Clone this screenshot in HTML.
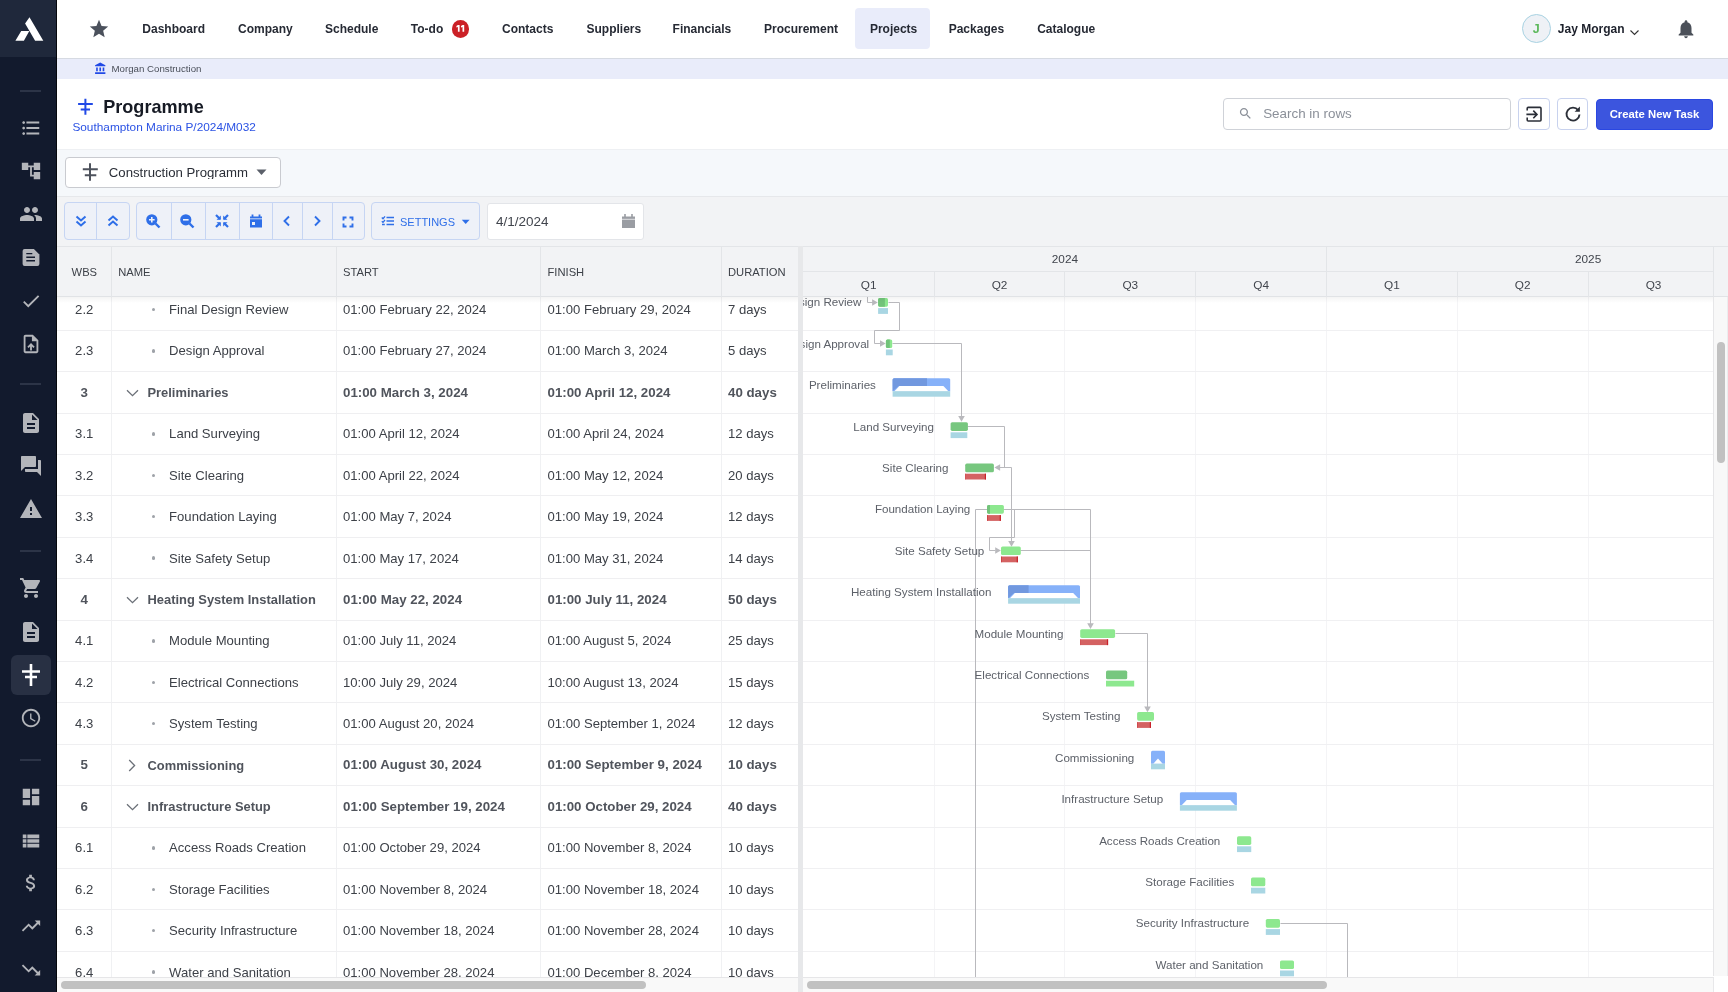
<!DOCTYPE html><html><head><meta charset="utf-8"><style>
html,body{margin:0;padding:0;width:1728px;height:992px;overflow:hidden;background:#fff;font-family:"Liberation Sans", sans-serif;}
div,svg{box-sizing:border-box;}
</style></head><body><div style="position:absolute;left:0;top:0;width:1728px;height:992px;overflow:hidden;will-change:transform;background:#fff">
<div style="position:absolute;left:0px;top:0px;width:56px;height:992px;background:#121a2d;"></div>
<div style="position:absolute;left:0px;top:0px;width:56px;height:57px;background:#1f283b;"></div>
<div style="position:absolute;left:56px;top:0px;width:1px;height:992px;background:#05070c;"></div>
<svg style="position:absolute;left:0px;top:0px;" width="56" height="57" viewBox="0 0 56 57"><path fill="#fff" d="M29.5 17.2L43.3 40.8H35.1L25.1 23.6Z M21.2 30.9H29.3L23.9 40.8H15.4Z"/></svg>
<div style="position:absolute;left:20px;top:90px;width:21px;height:2px;background:#2c3447;"></div>
<div style="position:absolute;left:20px;top:382.5px;width:21px;height:2px;background:#2c3447;"></div>
<div style="position:absolute;left:20px;top:549.5px;width:21px;height:2px;background:#2c3447;"></div>
<div style="position:absolute;left:20px;top:759px;width:21px;height:2px;background:#2c3447;"></div>
<svg style="position:absolute;left:19.50px;top:116.70px" width="22" height="22" viewBox="0 0 24 24"><path fill="#b3b5ba" d="M4 10.5c-.83 0-1.5.67-1.5 1.5s.67 1.5 1.5 1.5 1.5-.67 1.5-1.5-.67-1.5-1.5-1.5zm0-6c-.83 0-1.5.67-1.5 1.5S3.17 7.5 4 7.5 5.5 6.830 5.5 6 4.83 4.5 4 4.5zm0 12c-.83 0-1.5.68-1.5 1.5s.68 1.5 1.5 1.5 1.5-.68 1.5-1.5-.67-1.5-1.5-1.5zM7 19h14v-2H7v2zm0-6h14v-2H7v2zm0-8v2h14V5H7z"/></svg>
<svg style="position:absolute;left:19.50px;top:159.50px" width="22" height="22" viewBox="0 0 24 24"><path fill="#b3b5ba" d="M22 11V3h-7v3H9V3H2v8h7V8h2v10h4v3h7v-8h-7v3h-2V8h2v3z"/></svg>
<svg style="position:absolute;left:18.50px;top:202.40px" width="24" height="24" viewBox="0 0 24 24"><path fill="#b3b5ba" d="M16 11c1.66 0 2.99-1.34 2.99-3S17.66 5 16 5c-1.66 0-3 1.34-3 3s1.34 3 3 3zm-8 0c1.66 0 2.99-1.34 2.99-3S9.66 5 8 5C6.34 5 5 6.34 5 8s1.34 3 3 3zm0 2c-2.33 0-7 1.170-7 3.5V19h14v-2.5c0-2.33-4.67-3.5-7-3.5zm8 0c-.29 0-.62.02-.97.05 1.16.84 1.97 1.97 1.97 3.45V19h6v-2.5c0-2.33-4.67-3.5-7-3.5z"/></svg>
<svg style="position:absolute;left:19.50px;top:290.00px" width="22" height="22" viewBox="0 0 24 24"><path fill="#b3b5ba" d="M9 16.2L4.8 12l-1.4 1.4L9 19 21 7l-1.4-1.4L9 16.2z"/></svg>
<svg style="position:absolute;left:19.50px;top:332.70px" width="22" height="22" viewBox="0 0 24 24"><path fill="#b3b5ba" d="M14 2H6c-1.1 0-1.99.9-1.99 2L4 20c0 1.1.89 2 1.99 2H18c1.1 0 2-.9 2-2V8l-6-6zm4 18H6V4h7v5h5v11zM8 15.01l1.41 1.41L11 14.84V19h2v-4.16l1.59 1.59L16 15.01 12.01 11z"/></svg>
<svg style="position:absolute;left:18.50px;top:410.50px" width="24" height="24" viewBox="0 0 24 24"><path fill="#b3b5ba" d="M14 2H6c-1.1 0-1.99.9-1.99 2L4 20c0 1.1.89 2 1.99 2H18c1.1 0 2-.9 2-2V8l-6-6zm2 16H8v-2h8v2zm0-4H8v-2h8v2zm-3-5V3.5L18.5 9H13z"/></svg>
<svg style="position:absolute;left:18.50px;top:454.00px" width="24" height="24" viewBox="0 0 24 24"><path fill="#b3b5ba" d="M21 6h-2v9H6v2c0 .55.45 1 1 1h11l4 4V7c0-.55-.45-1-1-1zm-4 6V3c0-.55-.45-1-1-1H3c-.55 0-1 .45-1 1v14l4-4h10c.55 0 1-.45 1-1z"/></svg>
<svg style="position:absolute;left:18.50px;top:497.00px" width="24" height="24" viewBox="0 0 24 24"><path fill="#b3b5ba" d="M1 21h22L12 2 1 21zm12-3h-2v-2h2v2zm0-4h-2v-4h2v4z"/></svg>
<svg style="position:absolute;left:18.50px;top:576.40px" width="24" height="24" viewBox="0 0 24 24"><path fill="#b3b5ba" d="M7 18c-1.1 0-1.99.9-1.99 2S5.9 22 7 22s2-.9 2-2-.9-2-2-2zM1 2v2h2l3.6 7.59-1.35 2.45c-.16.28-.25.61-.25.96 0 1.1.9 2 2 2h12v-2H7.42c-.14 0-.25-.11-.25-.25l.03-.12.9-1.63h7.45c.75 0 1.41-.41 1.75-1.03l3.58-6.49c.08-.14.12-.31.12-.48 0-.55-.45-1-1-1H5.21l-.94-2H1zm16 16c-1.1 0-1.99.9-1.99 2s.89 2 1.99 2 2-.9 2-2-.9-2-2-2z"/></svg>
<svg style="position:absolute;left:18.50px;top:619.70px" width="24" height="24" viewBox="0 0 24 24"><path fill="#b3b5ba" d="M14 2H6c-1.1 0-1.99.9-1.99 2L4 20c0 1.1.89 2 1.99 2H18c1.1 0 2-.9 2-2V8l-6-6zm2 16H8v-2h8v2zm0-4H8v-2h8v2zm-3-5V3.5L18.5 9H13z"/></svg>
<svg style="position:absolute;left:19.50px;top:707.00px" width="22" height="22" viewBox="0 0 24 24"><path fill="#b3b5ba" d="M11.99 2C6.47 2 2 6.48 2 12s4.47 10 9.99 10C17.52 22 22 17.52 22 12S17.52 2 11.99 2zM12 20c-4.42 0-8-3.58-8-8s3.58-8 8-8 8 3.58 8 8-3.58 8-8 8zm.5-13H11v6l5.25 3.15.75-1.23-4.5-2.67z"/></svg>
<svg style="position:absolute;left:19.50px;top:786.00px" width="22" height="22" viewBox="0 0 24 24"><path fill="#b3b5ba" d="M3 13h8V3H3v10zm0 8h8v-6H3v6zm10 0h8V11h-8v10zm0-18v6h8V3h-8z"/></svg>
<svg style="position:absolute;left:19.50px;top:829.50px" width="22" height="22" viewBox="0 0 24 24"><path fill="#b3b5ba" d="M3 14h4v-4H3v4zm0 5h4v-4H3v4zM3 9h4V5H3v4zm5 5h13v-4H8v4zm0 5h13v-4H8v4zM8 5v4h13V5H8z"/></svg>
<svg style="position:absolute;left:19.50px;top:872.00px" width="22" height="22" viewBox="0 0 24 24"><path fill="#b3b5ba" d="M11.8 10.9c-2.27-.59-3-1.2-3-2.15 0-1.09 1.01-1.85 2.7-1.85 1.78 0 2.44.85 2.5 2.1h2.21c-.07-1.72-1.12-3.3-3.21-3.81V3h-3v2.16c-1.94.42-3.5 1.68-3.5 3.61 0 2.31 1.91 3.46 4.7 4.13 2.5.6 3 1.48 3 2.41 0 .69-.49 1.79-2.7 1.790-2.06 0-2.87-.92-2.98-2.1h-2.2c.12 2.19 1.76 3.42 3.68 3.83V21h3v-2.15c1.95-.37 3.5-1.5 3.5-3.55 0-2.84-2.43-3.81-4.7-4.4z"/></svg>
<svg style="position:absolute;left:19.50px;top:915.00px" width="22" height="22" viewBox="0 0 24 24"><path fill="#b3b5ba" d="M16 6l2.29 2.29-4.88 4.88-4-4L2 16.59 3.410 18l6-6 4 4 6.3-6.29L22 12V6z"/></svg>
<svg style="position:absolute;left:19.50px;top:958.80px" width="22" height="22" viewBox="0 0 24 24"><path fill="#b3b5ba" d="M16 18l2.29-2.29-4.88-4.88-4 4L2 7.41 3.41 6l6 6 4-4 6.3 6.29L22 12v6z"/></svg>
<div style="position:absolute;left:11px;top:655px;width:40px;height:40px;background:#283043;border-radius:6px;"></div>
<svg style="position:absolute;left:0px;top:240px;" width="56" height="30" viewBox="0 0 56 30"><path d="M24.6 9H33.9L39.4 14.5V24Q39.4 26 37.4 26H24.6Q22.6 26 22.6 24V11Q22.6 9 24.6 9Z" fill="#b3b5ba"/><path d="M26.3 13.6H32.3 M26.3 17.3H35 M26.3 20.8H35" stroke="#121a2d" stroke-width="1.4"/></svg>
<svg style="position:absolute;left:20px;top:663px;" width="22" height="24" viewBox="0 0 22 24"><path d="M11 1V23 M2 8.5H20 M5 14H17" stroke="#fff" stroke-width="2.6" fill="none"/></svg>
<div style="position:absolute;left:57px;top:58px;width:1671px;height:1px;background:#d6dae2;"></div>
<svg style="position:absolute;left:88.30px;top:17.60px" width="22" height="22" viewBox="0 0 24 24"><path fill="#4b515c" d="M12 17.27L18.18 21l-1.64-7.03L22 9.24l-7.19-.61L12 2 9.19 8.63 2 9.24l5.46 4.73L5.82 21z"/></svg>
<div style="position:absolute;left:855px;top:7.6px;width:75px;height:41.7px;background:#e9ecfa;border-radius:4px;"></div>
<div style="position:absolute;left:142.30px;top:23.00px;font-size:12px;line-height:12px;color:#262a34;font-weight:bold;white-space:nowrap;">Dashboard</div>
<div style="position:absolute;left:238.00px;top:23.00px;font-size:12px;line-height:12px;color:#262a34;font-weight:bold;white-space:nowrap;">Company</div>
<div style="position:absolute;left:325.00px;top:23.00px;font-size:12px;line-height:12px;color:#262a34;font-weight:bold;white-space:nowrap;">Schedule</div>
<div style="position:absolute;left:410.80px;top:23.00px;font-size:12px;line-height:12px;color:#262a34;font-weight:bold;white-space:nowrap;">To-do</div>
<div style="position:absolute;left:502.00px;top:23.00px;font-size:12px;line-height:12px;color:#262a34;font-weight:bold;white-space:nowrap;">Contacts</div>
<div style="position:absolute;left:586.50px;top:23.00px;font-size:12px;line-height:12px;color:#262a34;font-weight:bold;white-space:nowrap;">Suppliers</div>
<div style="position:absolute;left:672.60px;top:23.00px;font-size:12px;line-height:12px;color:#262a34;font-weight:bold;white-space:nowrap;">Financials</div>
<div style="position:absolute;left:764.00px;top:23.00px;font-size:12px;line-height:12px;color:#262a34;font-weight:bold;white-space:nowrap;">Procurement</div>
<div style="position:absolute;left:869.90px;top:23.00px;font-size:12px;line-height:12px;color:#262a34;font-weight:bold;white-space:nowrap;">Projects</div>
<div style="position:absolute;left:948.70px;top:23.00px;font-size:12px;line-height:12px;color:#262a34;font-weight:bold;white-space:nowrap;">Packages</div>
<div style="position:absolute;left:1037.20px;top:23.00px;font-size:12px;line-height:12px;color:#262a34;font-weight:bold;white-space:nowrap;">Catalogue</div>
<div style="position:absolute;left:451.7px;top:20.2px;width:17.5px;height:17.5px;background:#cb2127;border-radius:50%;"></div>
<svg style="position:absolute;left:451px;top:19px;" width="20" height="20" viewBox="0 0 20 20"><path d="M6.9 6H8.6V12.8H6.9V7.9L5.4 8.6V7.1Z M11.5 6H13.2V12.8H11.5V7.9L10 8.6V7.1Z" fill="#fff"/></svg>
<div style="position:absolute;left:1521.8px;top:14.3px;width:29px;height:29px;background:#eef1f6;border:1px solid #a8d2e2;border-radius:50%;"></div>
<div style="position:absolute;left:1236.30px;width:600px;text-align:center;top:23.00px;font-size:12.5px;line-height:12.5px;color:#5cb85c;font-weight:bold;white-space:nowrap;">J</div>
<div style="position:absolute;left:1557.80px;top:23.00px;font-size:12px;line-height:12px;color:#1c202b;font-weight:bold;white-space:nowrap;">Jay Morgan</div>
<svg style="position:absolute;left:1629px;top:28.5px;" width="11" height="8" viewBox="0 0 11 8"><path d="M1.5 1.5L5.5 5.5L9.5 1.5" stroke="#333" stroke-width="1.1" fill="none"/></svg>
<svg style="position:absolute;left:1674.60px;top:18.00px" width="22" height="22" viewBox="0 0 24 24"><path fill="#4b5059" d="M12 22c1.1 0 2-.9 2-2h-4c0 1.1.89 2 2 2zm6-6v-5c0-3.07-1.64-5.64-4.5-6.32V4c0-.83-.67-1.5-1.5-1.5s-1.5.67-1.5 1.5v.68C7.63 5.36 6 7.920 6 11v5l-2 2v1h16v-1l-2-2z"/></svg>
<div style="position:absolute;left:57px;top:59px;width:1671px;height:20px;background:#e9ecfa;"></div>
<svg style="position:absolute;left:94.30px;top:62.00px" width="13" height="13" viewBox="0 0 24 24"><path fill="#2149e6" d="M4 10v7h3v-7H4zm6 0v7h3v-7h-3zM2 22h19v-3H2v3zm14-12v7h3v-7h-3zm-4.5-9L2 6v2h19V6l-9.5-5z"/></svg>
<div style="position:absolute;left:111.50px;top:64.00px;font-size:9.7px;line-height:9.7px;color:#4a4f5a;font-weight:normal;white-space:nowrap;">Morgan Construction</div>
<svg style="position:absolute;left:76px;top:97px;" width="20" height="20" viewBox="0 0 20 20"><path d="M9.4 1.8V17.8 M2.1 7.1H16.8 M4.7 12.6H14" stroke="#2149e6" stroke-width="2" fill="none"/></svg>
<div style="position:absolute;left:103.20px;top:98.00px;font-size:18.1px;line-height:18.1px;color:#161a24;font-weight:bold;white-space:nowrap;">Programme</div>
<div style="position:absolute;left:72.40px;top:122.00px;font-size:11.84px;line-height:11.84px;color:#2b52e4;font-weight:normal;white-space:nowrap;">Southampton Marina P/2024/M032</div>
<div style="position:absolute;left:1223px;top:98.3px;width:288px;height:31.7px;border:1px solid #cfd2d8;border-radius:4px;background:#fff;"></div>
<svg style="position:absolute;left:1237.50px;top:106.10px" width="15" height="15" viewBox="0 0 24 24"><path fill="#8b9099" d="M15.5 14h-.79l-.28-.27C15.41 12.59 16 11.11 16 9.5 16 5.91 13.09 3 9.5 3S3 5.91 3 9.5 5.91 16 9.5 16c1.61 0 3.09-.59 4.23-1.57l.27.28v.79l5 4.99L20.49 19l-4.99-5zm-6 0C7.01 14 5 11.99 5 9.5S7.01 5 9.5 5 14 7.01 14 9.5 11.99 14 9.5 14z"/></svg>
<div style="position:absolute;left:1263.20px;top:107.00px;font-size:13.4px;line-height:13.4px;color:#8b9099;font-weight:normal;white-space:nowrap;">Search in rows</div>
<div style="position:absolute;left:1518.4px;top:98.3px;width:31.3px;height:31.3px;border:1px solid #c8d2ee;border-radius:4px;background:#fff;"></div>
<svg style="position:absolute;left:1524px;top:104px;" width="20" height="20" viewBox="0 0 20 20"><path d="M3.2 6.6V4.4Q3.2 3.4 4.2 3.4H16Q17 3.4 17 4.4V16Q17 17 16 17H4.2Q3.2 17 3.2 16V13.4" stroke="#2b2f38" stroke-width="1.6" fill="none"/><path d="M2.4 10.4H13 M9.3 6.6L13 10.4L9.3 14.2" stroke="#2b2f38" stroke-width="1.6" fill="none"/></svg>
<div style="position:absolute;left:1557.2px;top:98.3px;width:31.3px;height:31.3px;border:1px solid #c8d2ee;border-radius:4px;background:#fff;"></div>
<svg style="position:absolute;left:1563px;top:104px;" width="20" height="20" viewBox="0 0 20 20"><path d="M15.2 6.2A6.5 6.5 0 1 0 16.5 10.5" stroke="#2b2f38" stroke-width="1.9" fill="none"/><path d="M16.9 2.5V7.8H11.6Z" fill="#2b2f38"/></svg>
<div style="position:absolute;left:1596px;top:98.7px;width:117px;height:30.9px;background:#3c55de;border:1px solid #2a47e2;border-radius:4px;"></div>
<div style="position:absolute;left:1354.50px;width:600px;text-align:center;top:109.00px;font-size:11.3px;line-height:11.3px;color:#fff;font-weight:bold;white-space:nowrap;">Create New Task</div>
<div style="position:absolute;left:57px;top:149px;width:1671px;height:47px;background:#f5f8fb;border-top:1px solid #eef0f3;"></div>
<div style="position:absolute;left:65px;top:157.2px;width:216px;height:31.1px;background:#fff;border:1px solid #c9cbd0;border-radius:4px;"></div>
<svg style="position:absolute;left:81px;top:162px;" width="20" height="20" viewBox="0 0 20 20"><path d="M9 1.3V18.8 M1.8 7.2H16.8 M3.8 13.3H15.3" stroke="#4d525c" stroke-width="2" fill="none"/></svg>
<div style="position:absolute;left:108.80px;top:166.00px;font-size:13.2px;line-height:13.2px;color:#2a2e37;font-weight:normal;white-space:nowrap;width:141px;overflow:hidden;">Construction Programm</div>
<svg style="position:absolute;left:256px;top:169px;" width="12" height="7" viewBox="0 0 12 7"><path d="M0.5 0.5H10.5L5.5 6Z" fill="#5b606a"/></svg>
<div style="position:absolute;left:57px;top:196px;width:1671px;height:50.5px;background:#f2f3f5;border-top:1px solid #e6e8eb;"></div>
<div style="position:absolute;left:64.3px;top:202.2px;width:65.3px;height:38.3px;background:#eef1f8;border:1px solid #c6d5f3;border-radius:4px;"></div>
<div style="position:absolute;left:96.4px;top:202.2px;width:1px;height:38.3px;background:#c6d5f3;"></div>
<div style="position:absolute;left:136.3px;top:202.2px;width:228.3px;height:38.3px;background:#eef1f8;border:1px solid #c6d5f3;border-radius:4px;"></div>
<div style="position:absolute;left:170.7px;top:202.2px;width:1px;height:38.3px;background:#c6d5f3;"></div>
<div style="position:absolute;left:204.9px;top:202.2px;width:1px;height:38.3px;background:#c6d5f3;"></div>
<div style="position:absolute;left:239.3px;top:202.2px;width:1px;height:38.3px;background:#c6d5f3;"></div>
<div style="position:absolute;left:271.9px;top:202.2px;width:1px;height:38.3px;background:#c6d5f3;"></div>
<div style="position:absolute;left:302.1px;top:202.2px;width:1px;height:38.3px;background:#c6d5f3;"></div>
<div style="position:absolute;left:331.8px;top:202.2px;width:1px;height:38.3px;background:#c6d5f3;"></div>
<div style="position:absolute;left:371.1px;top:202.4px;width:109.3px;height:38px;background:#eef1f8;border:1px solid #c6d5f3;border-radius:4px;"></div>
<div style="position:absolute;left:487.3px;top:202.6px;width:157px;height:37.6px;background:#fff;border:1px solid #e3e5e9;border-radius:3px;"></div>
<div style="position:absolute;left:496.00px;top:215.00px;font-size:13.5px;line-height:13.5px;color:#41454d;font-weight:normal;white-space:nowrap;">4/1/2024</div>
<svg style="position:absolute;left:73px;top:213px;" width="16" height="16" viewBox="0 0 16 16"><path d="M3.5 3.5L8 7.5L12.5 3.5 M3.5 8.5L8 12.5L12.5 8.5" stroke="#2f6fe8" stroke-width="2" fill="none"/></svg>
<svg style="position:absolute;left:105px;top:213px;" width="16" height="16" viewBox="0 0 16 16"><path d="M3.5 7.5L8 3.5L12.5 7.5 M3.5 12.5L8 8.5L12.5 12.5" stroke="#2f6fe8" stroke-width="2" fill="none"/></svg>
<svg style="position:absolute;left:145px;top:213px;" width="16" height="16" viewBox="0 0 16 16"><circle cx="6.8" cy="6.8" r="5.6" fill="#2f6fe8"/><path d="M10.5 10.5L14.5 14.5" stroke="#2f6fe8" stroke-width="2.4"/><path d="M6.8 4V9.6 M4 6.8H9.6" stroke="#eef1f8" stroke-width="1.6"/></svg>
<svg style="position:absolute;left:179px;top:213px;" width="16" height="16" viewBox="0 0 16 16"><circle cx="6.8" cy="6.8" r="5.6" fill="#2f6fe8"/><path d="M10.5 10.5L14.5 14.5" stroke="#2f6fe8" stroke-width="2.4"/><path d="M4 6.8H9.6" stroke="#eef1f8" stroke-width="1.6"/></svg>
<svg style="position:absolute;left:214px;top:213px;" width="16" height="16" viewBox="0 0 16 16"><path d="M2 2L6 6 M14 2L10 6 M2 14L6 10 M14 14L10 10" stroke="#2f6fe8" stroke-width="2.2"/><path d="M2.5 6.8H6.8V2.5Z M13.5 6.8H9.2V2.5Z M2.5 9.2H6.8V13.5Z M13.5 9.2H9.2V13.5Z" fill="#2f6fe8"/></svg>
<svg style="position:absolute;left:248px;top:213px;" width="16" height="16" viewBox="0 0 16 16"><path d="M2 3.5H14V14.5H2Z" fill="#2f6fe8"/><path d="M4.5 1.5V4 M11.5 1.5V4" stroke="#2f6fe8" stroke-width="1.8"/><path d="M4 9H7V12H4Z" fill="#eef1f8"/><path d="M2 5.8H14" stroke="#eef1f8" stroke-width="0.8"/></svg>
<svg style="position:absolute;left:279px;top:213px;" width="16" height="16" viewBox="0 0 16 16"><path d="M10 3.5L5.5 8L10 12.5" stroke="#2f6fe8" stroke-width="1.9" fill="none"/></svg>
<svg style="position:absolute;left:309px;top:213px;" width="16" height="16" viewBox="0 0 16 16"><path d="M6 3.5L10.5 8L6 12.5" stroke="#2f6fe8" stroke-width="1.9" fill="none"/></svg>
<svg style="position:absolute;left:340px;top:214px;" width="16" height="16" viewBox="0 0 16 16"><path d="M3.5 6.5V3.5H6.5 M9.5 3.5H12.5V6.5 M12.5 9.5V12.5H9.5 M6.5 12.5H3.5V9.5" stroke="#2f6fe8" stroke-width="1.9" fill="none"/></svg>
<svg style="position:absolute;left:381px;top:214px;" width="14" height="14" viewBox="0 0 14 14"><path d="M5.5 3.5H13 M5.5 7H13 M5.5 10.5H13" stroke="#2f6fe8" stroke-width="1.5"/><path d="M0.8 3.5L2 4.7L4 2.3 M0.8 7.2L2 8.4L4 6 M1 10.5H3.8" stroke="#2f6fe8" stroke-width="1.3" fill="none"/></svg>
<div style="position:absolute;left:400.00px;top:217.00px;font-size:11.0px;line-height:11.0px;color:#2f6fe8;font-weight:normal;white-space:nowrap;">SETTINGS</div>
<svg style="position:absolute;left:460.8px;top:218.5px;" width="10" height="6" viewBox="0 0 10 6"><path d="M0.8 0.8H8.6L4.7 5Z" fill="#2f6fe8"/></svg>
<svg style="position:absolute;left:621px;top:213px;" width="15" height="16" viewBox="0 0 15 16"><path d="M1 3.5H14V15H1Z" fill="#9a9da3"/><path d="M4 1V4.5 M11 1V4.5" stroke="#9a9da3" stroke-width="1.6"/><path d="M1 6.3H14" stroke="#fff" stroke-width="0.7"/></svg>
<div style="position:absolute;left:57px;top:297px;width:740.5px;height:680px;overflow:hidden;background:#fff;">
<div style="position:absolute;left:54px;top:0px;width:1px;height:680px;background:#f0f1f3;"></div>
<div style="position:absolute;left:279px;top:0px;width:1px;height:680px;background:#f0f1f3;"></div>
<div style="position:absolute;left:483px;top:0px;width:1px;height:680px;background:#f0f1f3;"></div>
<div style="position:absolute;left:664px;top:0px;width:1px;height:680px;background:#f0f1f3;"></div>
<div style="position:absolute;left:0px;top:33px;width:741px;height:1px;background:#efeff1;"></div>
<div style="position:absolute;left:0px;top:74px;width:741px;height:1px;background:#efeff1;"></div>
<div style="position:absolute;left:0px;top:116px;width:741px;height:1px;background:#efeff1;"></div>
<div style="position:absolute;left:0px;top:157px;width:741px;height:1px;background:#efeff1;"></div>
<div style="position:absolute;left:0px;top:198px;width:741px;height:1px;background:#efeff1;"></div>
<div style="position:absolute;left:0px;top:240px;width:741px;height:1px;background:#efeff1;"></div>
<div style="position:absolute;left:0px;top:281px;width:741px;height:1px;background:#efeff1;"></div>
<div style="position:absolute;left:0px;top:323px;width:741px;height:1px;background:#efeff1;"></div>
<div style="position:absolute;left:0px;top:364px;width:741px;height:1px;background:#efeff1;"></div>
<div style="position:absolute;left:0px;top:405px;width:741px;height:1px;background:#efeff1;"></div>
<div style="position:absolute;left:0px;top:447px;width:741px;height:1px;background:#efeff1;"></div>
<div style="position:absolute;left:0px;top:488px;width:741px;height:1px;background:#efeff1;"></div>
<div style="position:absolute;left:0px;top:530px;width:741px;height:1px;background:#efeff1;"></div>
<div style="position:absolute;left:0px;top:571px;width:741px;height:1px;background:#efeff1;"></div>
<div style="position:absolute;left:0px;top:612px;width:741px;height:1px;background:#efeff1;"></div>
<div style="position:absolute;left:0px;top:654px;width:741px;height:1px;background:#efeff1;"></div>
<div style="position:absolute;left:0px;top:695px;width:741px;height:1px;background:#efeff1;"></div>
<div style="position:absolute;left:0px;top:737px;width:741px;height:1px;background:#efeff1;"></div>
<div style="position:absolute;left:-72.80px;width:200px;text-align:center;top:6.00px;font-size:13.1px;line-height:13.1px;color:#3d4148;font-weight:normal;white-space:nowrap;">2.2</div>
<div style="position:absolute;left:94.9px;top:10.9px;width:3.6px;height:3.6px;background:#9ea2a8;border-radius:50%;"></div>
<div style="position:absolute;left:112.10px;top:6.00px;font-size:13.1px;line-height:13.1px;color:#3d4148;font-weight:normal;white-space:nowrap;">Final Design Review</div>
<div style="position:absolute;left:286.00px;top:6.00px;font-size:13.1px;line-height:13.1px;color:#3d4148;font-weight:normal;white-space:nowrap;">01:00 February 22, 2024</div>
<div style="position:absolute;left:490.50px;top:6.00px;font-size:13.1px;line-height:13.1px;color:#3d4148;font-weight:normal;white-space:nowrap;">01:00 February 29, 2024</div>
<div style="position:absolute;left:671.00px;top:6.00px;font-size:13.1px;line-height:13.1px;color:#3d4148;font-weight:normal;white-space:nowrap;">7 days</div>
<div style="position:absolute;left:-72.80px;width:200px;text-align:center;top:47.00px;font-size:13.1px;line-height:13.1px;color:#3d4148;font-weight:normal;white-space:nowrap;">2.3</div>
<div style="position:absolute;left:94.9px;top:52.3px;width:3.6px;height:3.6px;background:#9ea2a8;border-radius:50%;"></div>
<div style="position:absolute;left:112.10px;top:47.00px;font-size:13.1px;line-height:13.1px;color:#3d4148;font-weight:normal;white-space:nowrap;">Design Approval</div>
<div style="position:absolute;left:286.00px;top:47.00px;font-size:13.1px;line-height:13.1px;color:#3d4148;font-weight:normal;white-space:nowrap;">01:00 February 27, 2024</div>
<div style="position:absolute;left:490.50px;top:47.00px;font-size:13.1px;line-height:13.1px;color:#3d4148;font-weight:normal;white-space:nowrap;">01:00 March 3, 2024</div>
<div style="position:absolute;left:671.00px;top:47.00px;font-size:13.1px;line-height:13.1px;color:#3d4148;font-weight:normal;white-space:nowrap;">5 days</div>
<div style="position:absolute;left:-72.80px;width:200px;text-align:center;top:89.00px;font-size:13.3px;line-height:13.3px;color:#50545c;font-weight:bold;white-space:nowrap;">3</div>
<svg style="position:absolute;left:69px;top:91.50px" width="13" height="8" viewBox="0 0 13 8"><path d="M1 1.2L6.5 6.6L12 1.2" stroke="#6b7078" stroke-width="1.3" fill="none"/></svg>
<div style="position:absolute;left:90.50px;top:90.00px;font-size:12.9px;line-height:12.9px;color:#50545c;font-weight:bold;white-space:nowrap;">Preliminaries</div>
<div style="position:absolute;left:286.00px;top:89.00px;font-size:13.3px;line-height:13.3px;color:#50545c;font-weight:bold;white-space:nowrap;">01:00 March 3, 2024</div>
<div style="position:absolute;left:490.50px;top:89.00px;font-size:13.3px;line-height:13.3px;color:#50545c;font-weight:bold;white-space:nowrap;">01:00 April 12, 2024</div>
<div style="position:absolute;left:671.00px;top:89.00px;font-size:13.3px;line-height:13.3px;color:#50545c;font-weight:bold;white-space:nowrap;">40 days</div>
<div style="position:absolute;left:-72.80px;width:200px;text-align:center;top:130.00px;font-size:13.1px;line-height:13.1px;color:#3d4148;font-weight:normal;white-space:nowrap;">3.1</div>
<div style="position:absolute;left:94.9px;top:135.1px;width:3.6px;height:3.6px;background:#9ea2a8;border-radius:50%;"></div>
<div style="position:absolute;left:112.10px;top:130.00px;font-size:13.1px;line-height:13.1px;color:#3d4148;font-weight:normal;white-space:nowrap;">Land Surveying</div>
<div style="position:absolute;left:286.00px;top:130.00px;font-size:13.1px;line-height:13.1px;color:#3d4148;font-weight:normal;white-space:nowrap;">01:00 April 12, 2024</div>
<div style="position:absolute;left:490.50px;top:130.00px;font-size:13.1px;line-height:13.1px;color:#3d4148;font-weight:normal;white-space:nowrap;">01:00 April 24, 2024</div>
<div style="position:absolute;left:671.00px;top:130.00px;font-size:13.1px;line-height:13.1px;color:#3d4148;font-weight:normal;white-space:nowrap;">12 days</div>
<div style="position:absolute;left:-72.80px;width:200px;text-align:center;top:172.00px;font-size:13.1px;line-height:13.1px;color:#3d4148;font-weight:normal;white-space:nowrap;">3.2</div>
<div style="position:absolute;left:94.9px;top:176.5px;width:3.6px;height:3.6px;background:#9ea2a8;border-radius:50%;"></div>
<div style="position:absolute;left:112.10px;top:172.00px;font-size:13.1px;line-height:13.1px;color:#3d4148;font-weight:normal;white-space:nowrap;">Site Clearing</div>
<div style="position:absolute;left:286.00px;top:172.00px;font-size:13.1px;line-height:13.1px;color:#3d4148;font-weight:normal;white-space:nowrap;">01:00 April 22, 2024</div>
<div style="position:absolute;left:490.50px;top:172.00px;font-size:13.1px;line-height:13.1px;color:#3d4148;font-weight:normal;white-space:nowrap;">01:00 May 12, 2024</div>
<div style="position:absolute;left:671.00px;top:172.00px;font-size:13.1px;line-height:13.1px;color:#3d4148;font-weight:normal;white-space:nowrap;">20 days</div>
<div style="position:absolute;left:-72.80px;width:200px;text-align:center;top:213.00px;font-size:13.1px;line-height:13.1px;color:#3d4148;font-weight:normal;white-space:nowrap;">3.3</div>
<div style="position:absolute;left:94.9px;top:217.9px;width:3.6px;height:3.6px;background:#9ea2a8;border-radius:50%;"></div>
<div style="position:absolute;left:112.10px;top:213.00px;font-size:13.1px;line-height:13.1px;color:#3d4148;font-weight:normal;white-space:nowrap;">Foundation Laying</div>
<div style="position:absolute;left:286.00px;top:213.00px;font-size:13.1px;line-height:13.1px;color:#3d4148;font-weight:normal;white-space:nowrap;">01:00 May 7, 2024</div>
<div style="position:absolute;left:490.50px;top:213.00px;font-size:13.1px;line-height:13.1px;color:#3d4148;font-weight:normal;white-space:nowrap;">01:00 May 19, 2024</div>
<div style="position:absolute;left:671.00px;top:213.00px;font-size:13.1px;line-height:13.1px;color:#3d4148;font-weight:normal;white-space:nowrap;">12 days</div>
<div style="position:absolute;left:-72.80px;width:200px;text-align:center;top:255.00px;font-size:13.1px;line-height:13.1px;color:#3d4148;font-weight:normal;white-space:nowrap;">3.4</div>
<div style="position:absolute;left:94.9px;top:259.3px;width:3.6px;height:3.6px;background:#9ea2a8;border-radius:50%;"></div>
<div style="position:absolute;left:112.10px;top:255.00px;font-size:13.1px;line-height:13.1px;color:#3d4148;font-weight:normal;white-space:nowrap;">Site Safety Setup</div>
<div style="position:absolute;left:286.00px;top:255.00px;font-size:13.1px;line-height:13.1px;color:#3d4148;font-weight:normal;white-space:nowrap;">01:00 May 17, 2024</div>
<div style="position:absolute;left:490.50px;top:255.00px;font-size:13.1px;line-height:13.1px;color:#3d4148;font-weight:normal;white-space:nowrap;">01:00 May 31, 2024</div>
<div style="position:absolute;left:671.00px;top:255.00px;font-size:13.1px;line-height:13.1px;color:#3d4148;font-weight:normal;white-space:nowrap;">14 days</div>
<div style="position:absolute;left:-72.80px;width:200px;text-align:center;top:296.00px;font-size:13.3px;line-height:13.3px;color:#50545c;font-weight:bold;white-space:nowrap;">4</div>
<svg style="position:absolute;left:69px;top:298.50px" width="13" height="8" viewBox="0 0 13 8"><path d="M1 1.2L6.5 6.6L12 1.2" stroke="#6b7078" stroke-width="1.3" fill="none"/></svg>
<div style="position:absolute;left:90.50px;top:297.00px;font-size:12.9px;line-height:12.9px;color:#50545c;font-weight:bold;white-space:nowrap;">Heating System Installation</div>
<div style="position:absolute;left:286.00px;top:296.00px;font-size:13.3px;line-height:13.3px;color:#50545c;font-weight:bold;white-space:nowrap;">01:00 May 22, 2024</div>
<div style="position:absolute;left:490.50px;top:296.00px;font-size:13.3px;line-height:13.3px;color:#50545c;font-weight:bold;white-space:nowrap;">01:00 July 11, 2024</div>
<div style="position:absolute;left:671.00px;top:296.00px;font-size:13.3px;line-height:13.3px;color:#50545c;font-weight:bold;white-space:nowrap;">50 days</div>
<div style="position:absolute;left:-72.80px;width:200px;text-align:center;top:337.00px;font-size:13.1px;line-height:13.1px;color:#3d4148;font-weight:normal;white-space:nowrap;">4.1</div>
<div style="position:absolute;left:94.9px;top:342.1px;width:3.6px;height:3.6px;background:#9ea2a8;border-radius:50%;"></div>
<div style="position:absolute;left:112.10px;top:337.00px;font-size:13.1px;line-height:13.1px;color:#3d4148;font-weight:normal;white-space:nowrap;">Module Mounting</div>
<div style="position:absolute;left:286.00px;top:337.00px;font-size:13.1px;line-height:13.1px;color:#3d4148;font-weight:normal;white-space:nowrap;">01:00 July 11, 2024</div>
<div style="position:absolute;left:490.50px;top:337.00px;font-size:13.1px;line-height:13.1px;color:#3d4148;font-weight:normal;white-space:nowrap;">01:00 August 5, 2024</div>
<div style="position:absolute;left:671.00px;top:337.00px;font-size:13.1px;line-height:13.1px;color:#3d4148;font-weight:normal;white-space:nowrap;">25 days</div>
<div style="position:absolute;left:-72.80px;width:200px;text-align:center;top:379.00px;font-size:13.1px;line-height:13.1px;color:#3d4148;font-weight:normal;white-space:nowrap;">4.2</div>
<div style="position:absolute;left:94.9px;top:383.5px;width:3.6px;height:3.6px;background:#9ea2a8;border-radius:50%;"></div>
<div style="position:absolute;left:112.10px;top:379.00px;font-size:13.1px;line-height:13.1px;color:#3d4148;font-weight:normal;white-space:nowrap;">Electrical Connections</div>
<div style="position:absolute;left:286.00px;top:379.00px;font-size:13.1px;line-height:13.1px;color:#3d4148;font-weight:normal;white-space:nowrap;">10:00 July 29, 2024</div>
<div style="position:absolute;left:490.50px;top:379.00px;font-size:13.1px;line-height:13.1px;color:#3d4148;font-weight:normal;white-space:nowrap;">10:00 August 13, 2024</div>
<div style="position:absolute;left:671.00px;top:379.00px;font-size:13.1px;line-height:13.1px;color:#3d4148;font-weight:normal;white-space:nowrap;">15 days</div>
<div style="position:absolute;left:-72.80px;width:200px;text-align:center;top:420.00px;font-size:13.1px;line-height:13.1px;color:#3d4148;font-weight:normal;white-space:nowrap;">4.3</div>
<div style="position:absolute;left:94.9px;top:424.9px;width:3.6px;height:3.6px;background:#9ea2a8;border-radius:50%;"></div>
<div style="position:absolute;left:112.10px;top:420.00px;font-size:13.1px;line-height:13.1px;color:#3d4148;font-weight:normal;white-space:nowrap;">System Testing</div>
<div style="position:absolute;left:286.00px;top:420.00px;font-size:13.1px;line-height:13.1px;color:#3d4148;font-weight:normal;white-space:nowrap;">01:00 August 20, 2024</div>
<div style="position:absolute;left:490.50px;top:420.00px;font-size:13.1px;line-height:13.1px;color:#3d4148;font-weight:normal;white-space:nowrap;">01:00 September 1, 2024</div>
<div style="position:absolute;left:671.00px;top:420.00px;font-size:13.1px;line-height:13.1px;color:#3d4148;font-weight:normal;white-space:nowrap;">12 days</div>
<div style="position:absolute;left:-72.80px;width:200px;text-align:center;top:461.00px;font-size:13.3px;line-height:13.3px;color:#50545c;font-weight:bold;white-space:nowrap;">5</div>
<svg style="position:absolute;left:71px;top:461.60px" width="8" height="13" viewBox="0 0 8 13"><path d="M1.2 1L6.6 6.5L1.2 12" stroke="#6b7078" stroke-width="1.3" fill="none"/></svg>
<div style="position:absolute;left:90.50px;top:463.00px;font-size:12.9px;line-height:12.9px;color:#50545c;font-weight:bold;white-space:nowrap;">Commissioning</div>
<div style="position:absolute;left:286.00px;top:461.00px;font-size:13.3px;line-height:13.3px;color:#50545c;font-weight:bold;white-space:nowrap;">01:00 August 30, 2024</div>
<div style="position:absolute;left:490.50px;top:461.00px;font-size:13.3px;line-height:13.3px;color:#50545c;font-weight:bold;white-space:nowrap;">01:00 September 9, 2024</div>
<div style="position:absolute;left:671.00px;top:461.00px;font-size:13.3px;line-height:13.3px;color:#50545c;font-weight:bold;white-space:nowrap;">10 days</div>
<div style="position:absolute;left:-72.80px;width:200px;text-align:center;top:503.00px;font-size:13.3px;line-height:13.3px;color:#50545c;font-weight:bold;white-space:nowrap;">6</div>
<svg style="position:absolute;left:69px;top:505.50px" width="13" height="8" viewBox="0 0 13 8"><path d="M1 1.2L6.5 6.6L12 1.2" stroke="#6b7078" stroke-width="1.3" fill="none"/></svg>
<div style="position:absolute;left:90.50px;top:504.00px;font-size:12.9px;line-height:12.9px;color:#50545c;font-weight:bold;white-space:nowrap;">Infrastructure Setup</div>
<div style="position:absolute;left:286.00px;top:503.00px;font-size:13.3px;line-height:13.3px;color:#50545c;font-weight:bold;white-space:nowrap;">01:00 September 19, 2024</div>
<div style="position:absolute;left:490.50px;top:503.00px;font-size:13.3px;line-height:13.3px;color:#50545c;font-weight:bold;white-space:nowrap;">01:00 October 29, 2024</div>
<div style="position:absolute;left:671.00px;top:503.00px;font-size:13.3px;line-height:13.3px;color:#50545c;font-weight:bold;white-space:nowrap;">40 days</div>
<div style="position:absolute;left:-72.80px;width:200px;text-align:center;top:544.00px;font-size:13.1px;line-height:13.1px;color:#3d4148;font-weight:normal;white-space:nowrap;">6.1</div>
<div style="position:absolute;left:94.9px;top:549.1px;width:3.6px;height:3.6px;background:#9ea2a8;border-radius:50%;"></div>
<div style="position:absolute;left:112.10px;top:544.00px;font-size:13.1px;line-height:13.1px;color:#3d4148;font-weight:normal;white-space:nowrap;">Access Roads Creation</div>
<div style="position:absolute;left:286.00px;top:544.00px;font-size:13.1px;line-height:13.1px;color:#3d4148;font-weight:normal;white-space:nowrap;">01:00 October 29, 2024</div>
<div style="position:absolute;left:490.50px;top:544.00px;font-size:13.1px;line-height:13.1px;color:#3d4148;font-weight:normal;white-space:nowrap;">01:00 November 8, 2024</div>
<div style="position:absolute;left:671.00px;top:544.00px;font-size:13.1px;line-height:13.1px;color:#3d4148;font-weight:normal;white-space:nowrap;">10 days</div>
<div style="position:absolute;left:-72.80px;width:200px;text-align:center;top:586.00px;font-size:13.1px;line-height:13.1px;color:#3d4148;font-weight:normal;white-space:nowrap;">6.2</div>
<div style="position:absolute;left:94.9px;top:590.5px;width:3.6px;height:3.6px;background:#9ea2a8;border-radius:50%;"></div>
<div style="position:absolute;left:112.10px;top:586.00px;font-size:13.1px;line-height:13.1px;color:#3d4148;font-weight:normal;white-space:nowrap;">Storage Facilities</div>
<div style="position:absolute;left:286.00px;top:586.00px;font-size:13.1px;line-height:13.1px;color:#3d4148;font-weight:normal;white-space:nowrap;">01:00 November 8, 2024</div>
<div style="position:absolute;left:490.50px;top:586.00px;font-size:13.1px;line-height:13.1px;color:#3d4148;font-weight:normal;white-space:nowrap;">01:00 November 18, 2024</div>
<div style="position:absolute;left:671.00px;top:586.00px;font-size:13.1px;line-height:13.1px;color:#3d4148;font-weight:normal;white-space:nowrap;">10 days</div>
<div style="position:absolute;left:-72.80px;width:200px;text-align:center;top:627.00px;font-size:13.1px;line-height:13.1px;color:#3d4148;font-weight:normal;white-space:nowrap;">6.3</div>
<div style="position:absolute;left:94.9px;top:631.9px;width:3.6px;height:3.6px;background:#9ea2a8;border-radius:50%;"></div>
<div style="position:absolute;left:112.10px;top:627.00px;font-size:13.1px;line-height:13.1px;color:#3d4148;font-weight:normal;white-space:nowrap;">Security Infrastructure</div>
<div style="position:absolute;left:286.00px;top:627.00px;font-size:13.1px;line-height:13.1px;color:#3d4148;font-weight:normal;white-space:nowrap;">01:00 November 18, 2024</div>
<div style="position:absolute;left:490.50px;top:627.00px;font-size:13.1px;line-height:13.1px;color:#3d4148;font-weight:normal;white-space:nowrap;">01:00 November 28, 2024</div>
<div style="position:absolute;left:671.00px;top:627.00px;font-size:13.1px;line-height:13.1px;color:#3d4148;font-weight:normal;white-space:nowrap;">10 days</div>
<div style="position:absolute;left:-72.80px;width:200px;text-align:center;top:669.00px;font-size:13.1px;line-height:13.1px;color:#3d4148;font-weight:normal;white-space:nowrap;">6.4</div>
<div style="position:absolute;left:94.9px;top:673.3px;width:3.6px;height:3.6px;background:#9ea2a8;border-radius:50%;"></div>
<div style="position:absolute;left:112.10px;top:669.00px;font-size:13.1px;line-height:13.1px;color:#3d4148;font-weight:normal;white-space:nowrap;">Water and Sanitation</div>
<div style="position:absolute;left:286.00px;top:669.00px;font-size:13.1px;line-height:13.1px;color:#3d4148;font-weight:normal;white-space:nowrap;">01:00 November 28, 2024</div>
<div style="position:absolute;left:490.50px;top:669.00px;font-size:13.1px;line-height:13.1px;color:#3d4148;font-weight:normal;white-space:nowrap;">01:00 December 8, 2024</div>
<div style="position:absolute;left:671.00px;top:669.00px;font-size:13.1px;line-height:13.1px;color:#3d4148;font-weight:normal;white-space:nowrap;">10 days</div>
</div>
<div style="position:absolute;left:57px;top:246.3px;width:740.5px;height:51.0px;background:#f2f3f5;border-top:1px solid #e3e5e8;border-bottom:1px solid #e1e3e6;"></div>
<div style="position:absolute;left:110.7px;top:246.3px;width:1px;height:51.0px;background:#e3e5e8;"></div>
<div style="position:absolute;left:336.1px;top:246.3px;width:1px;height:51.0px;background:#e3e5e8;"></div>
<div style="position:absolute;left:540.0px;top:246.3px;width:1px;height:51.0px;background:#e3e5e8;"></div>
<div style="position:absolute;left:721.0px;top:246.3px;width:1px;height:51.0px;background:#e3e5e8;"></div>
<div style="position:absolute;left:71.60px;top:267.00px;font-size:11.2px;line-height:11.2px;color:#3d4148;font-weight:normal;white-space:nowrap;">WBS</div>
<div style="position:absolute;left:118.20px;top:267.00px;font-size:11.2px;line-height:11.2px;color:#3d4148;font-weight:normal;white-space:nowrap;">NAME</div>
<div style="position:absolute;left:343.00px;top:267.00px;font-size:11.2px;line-height:11.2px;color:#3d4148;font-weight:normal;white-space:nowrap;">START</div>
<div style="position:absolute;left:547.50px;top:267.00px;font-size:11.2px;line-height:11.2px;color:#3d4148;font-weight:normal;white-space:nowrap;">FINISH</div>
<div style="position:absolute;left:728.00px;top:267.00px;font-size:11.2px;line-height:11.2px;color:#3d4148;font-weight:normal;white-space:nowrap;">DURATION</div>
<div style="position:absolute;left:797.5px;top:246.3px;width:5.6px;height:745.7px;background:#e7e8ea;"></div>
<div style="position:absolute;left:57px;top:977px;width:740.5px;height:15px;background:#f9f9f9;border-top:1px solid #e6e6e8;"></div>
<div style="position:absolute;left:60.8px;top:981px;width:585.7px;height:7.8px;background:#c1c1c1;border-radius:4px;"></div>
<div style="position:absolute;left:803.3px;top:246.3px;width:910.0px;height:51.0px;background:#f2f3f5;border-top:1px solid #e3e5e8;border-bottom:1px solid #e1e3e6;"></div>
<div style="position:absolute;left:803.3px;top:271px;width:910.0px;height:1px;background:#e3e5e8;"></div>
<div style="position:absolute;left:1713.3px;top:246.3px;width:14.700000000000045px;height:51.0px;background:#f2f3f5;border-top:1px solid #e3e5e8;border-left:1px solid #e3e5e8;border-bottom:1px solid #e1e3e6;"></div>
<div style="position:absolute;left:1326.0px;top:246.3px;width:1px;height:24.69999999999999px;background:#e3e5e8;"></div>
<div style="position:absolute;left:933.5999999999999px;top:271px;width:1px;height:26.30000000000001px;background:#e3e5e8;"></div>
<div style="position:absolute;left:1064.4px;top:271px;width:1px;height:26.30000000000001px;background:#e3e5e8;"></div>
<div style="position:absolute;left:1195.2px;top:271px;width:1px;height:26.30000000000001px;background:#e3e5e8;"></div>
<div style="position:absolute;left:1326.0px;top:271px;width:1px;height:26.30000000000001px;background:#e3e5e8;"></div>
<div style="position:absolute;left:1456.8px;top:271px;width:1px;height:26.30000000000001px;background:#e3e5e8;"></div>
<div style="position:absolute;left:1587.6px;top:271px;width:1px;height:26.30000000000001px;background:#e3e5e8;"></div>
<div style="position:absolute;left:764.90px;width:600px;text-align:center;top:254.00px;font-size:11.8px;line-height:11.8px;color:#41454d;font-weight:normal;white-space:nowrap;">2024</div>
<div style="position:absolute;left:1288.10px;width:600px;text-align:center;top:254.00px;font-size:11.8px;line-height:11.8px;color:#41454d;font-weight:normal;white-space:nowrap;">2025</div>
<div style="position:absolute;left:568.70px;width:600px;text-align:center;top:280.00px;font-size:11.8px;line-height:11.8px;color:#41454d;font-weight:normal;white-space:nowrap;">Q1</div>
<div style="position:absolute;left:699.50px;width:600px;text-align:center;top:280.00px;font-size:11.8px;line-height:11.8px;color:#41454d;font-weight:normal;white-space:nowrap;">Q2</div>
<div style="position:absolute;left:830.30px;width:600px;text-align:center;top:280.00px;font-size:11.8px;line-height:11.8px;color:#41454d;font-weight:normal;white-space:nowrap;">Q3</div>
<div style="position:absolute;left:961.10px;width:600px;text-align:center;top:280.00px;font-size:11.8px;line-height:11.8px;color:#41454d;font-weight:normal;white-space:nowrap;">Q4</div>
<div style="position:absolute;left:1091.90px;width:600px;text-align:center;top:280.00px;font-size:11.8px;line-height:11.8px;color:#41454d;font-weight:normal;white-space:nowrap;">Q1</div>
<div style="position:absolute;left:1222.70px;width:600px;text-align:center;top:280.00px;font-size:11.8px;line-height:11.8px;color:#41454d;font-weight:normal;white-space:nowrap;">Q2</div>
<div style="position:absolute;left:1353.50px;width:600px;text-align:center;top:280.00px;font-size:11.8px;line-height:11.8px;color:#41454d;font-weight:normal;white-space:nowrap;">Q3</div>
<div style="position:absolute;left:803px;top:297px;width:910.30px;height:680px;overflow:hidden;background:#fff;">
<svg style="position:absolute;left:0;top:0" width="910.3" height="680"><rect x="131" y="0" width="1" height="680" fill="#f4f4f6"/><rect x="261" y="0" width="1" height="680" fill="#f4f4f6"/><rect x="392" y="0" width="1" height="680" fill="#f4f4f6"/><rect x="523" y="0" width="1" height="680" fill="#f4f4f6"/><rect x="654" y="0" width="1" height="680" fill="#f4f4f6"/><rect x="785" y="0" width="1" height="680" fill="#f4f4f6"/><rect x="0" y="33" width="910.3" height="1" fill="#f0f0f2"/><rect x="0" y="74" width="910.3" height="1" fill="#f0f0f2"/><rect x="0" y="116" width="910.3" height="1" fill="#f0f0f2"/><rect x="0" y="157" width="910.3" height="1" fill="#f0f0f2"/><rect x="0" y="198" width="910.3" height="1" fill="#f0f0f2"/><rect x="0" y="240" width="910.3" height="1" fill="#f0f0f2"/><rect x="0" y="281" width="910.3" height="1" fill="#f0f0f2"/><rect x="0" y="323" width="910.3" height="1" fill="#f0f0f2"/><rect x="0" y="364" width="910.3" height="1" fill="#f0f0f2"/><rect x="0" y="405" width="910.3" height="1" fill="#f0f0f2"/><rect x="0" y="447" width="910.3" height="1" fill="#f0f0f2"/><rect x="0" y="488" width="910.3" height="1" fill="#f0f0f2"/><rect x="0" y="530" width="910.3" height="1" fill="#f0f0f2"/><rect x="0" y="571" width="910.3" height="1" fill="#f0f0f2"/><rect x="0" y="612" width="910.3" height="1" fill="#f0f0f2"/><rect x="0" y="654" width="910.3" height="1" fill="#f0f0f2"/><rect x="0" y="695" width="910.3" height="1" fill="#f0f0f2"/><path d="M64.50 -6.50 L64.50 5.50 L70.50 5.50" stroke="#b9b9bd" stroke-width="1" fill="none"/><path d="M74.79999999999995 5.5 L69.09999999999995 2.2 L69.09999999999995 8.8Z" fill="#b9b9bd"/><path d="M85.50 5.50 L96.50 5.50 L96.50 33.50 L71.50 33.50 L71.50 46.50 L78.50 46.50" stroke="#b9b9bd" stroke-width="1" fill="none"/><path d="M82.70000000000005 46.5 L77.00000000000004 43.2 L77.00000000000004 49.8Z" fill="#b9b9bd"/><path d="M89.50 46.50 L158.50 46.50 L158.50 120.50" stroke="#b9b9bd" stroke-width="1" fill="none"/><path d="M158.5 124.80000000000001 L155.2 119.10000000000001 L161.8 119.10000000000001Z" fill="#b9b9bd"/><path d="M164.50 129.50 L201.50 129.50 L201.50 170.50 L196.50 170.50" stroke="#b9b9bd" stroke-width="1" fill="none"/><path d="M191.39999999999998 170.5 L197.09999999999997 167.2 L197.09999999999997 173.8Z" fill="#b9b9bd"/><path d="M196.50 170.50 L208.50 170.50 L208.50 244.50" stroke="#b9b9bd" stroke-width="1" fill="none"/><path d="M208.5 249.79999999999995 L205.2 244.09999999999997 L211.8 244.09999999999997Z" fill="#b9b9bd"/><path d="M184.50 212.50 L172.50 212.50 L172.50 693.50" stroke="#b9b9bd" stroke-width="1" fill="none"/><path d="M200.50 212.50 L287.50 212.50 L287.50 327.50" stroke="#b9b9bd" stroke-width="1" fill="none"/><path d="M287.5 332 L284.2 326.3 L290.8 326.3Z" fill="#b9b9bd"/><path d="M200.50 212.50 L211.50 212.50 L211.50 240.50 L186.50 240.50 L186.50 253.50 L192.50 253.50" stroke="#b9b9bd" stroke-width="1" fill="none"/><path d="M197.89999999999998 253.5 L192.2 250.2 L192.2 256.8Z" fill="#b9b9bd"/><path d="M217.50 253.50 L287.50 253.50" stroke="#b9b9bd" stroke-width="1" fill="none"/><path d="M312.50 336.50 L344.50 336.50 L344.50 410.50" stroke="#b9b9bd" stroke-width="1" fill="none"/><path d="M344.5 415.29999999999995 L341.2 409.59999999999997 L347.8 409.59999999999997Z" fill="#b9b9bd"/><path d="M477.50 626.50 L544.50 626.50 L544.50 693.50" stroke="#b9b9bd" stroke-width="1" fill="none"/><rect x="75.10" y="1.00" width="9.90" height="8.7" rx="1.6" fill="#8de88f"/><path d="M76.70 1.00 H81.90 V9.70 H76.70 A1.6 1.6 0 0 1 75.10 8.10 V2.60 A1.6 1.6 0 0 1 76.70 1.00Z" fill="#72c37a"/><rect x="75.10" y="11.10" width="9.90" height="5.8" fill="#a9d6e3"/><rect x="82.90" y="42.40" width="6.30" height="8.7" rx="1.6" fill="#8de88f"/><path d="M84.50 42.40 H86.80 V51.10 H84.50 A1.6 1.6 0 0 1 82.90 49.50 V44.00 A1.6 1.6 0 0 1 84.50 42.40Z" fill="#72c37a"/><rect x="82.90" y="52.50" width="6.80" height="5.8" fill="#a9d6e3"/><path d="M89.60000000000002 82.69999999999999 A1.5 1.5 0 0 1 91.10000000000002 81.19999999999999 H145.70000000000005 A1.5 1.5 0 0 1 147.20000000000005 82.69999999999999 V94.19999999999999 H89.60000000000002Z" fill="#86b1f9"/><path d="M89.60000000000002 82.69999999999999 A1.5 1.5 0 0 1 91.10000000000002 81.19999999999999 H124 V88.99999999999999 H89.60000000000002Z" fill="#7198df"/><path d="M89.60000000000002 88.99999999999999 H95.60000000000002 L89.60000000000002 94.19999999999999Z" fill="#7198df"/><path d="M91.40000000000002 94.19999999999999 L96.40000000000002 88.99999999999999 H140.40000000000003 L145.40000000000003 94.19999999999999Z" fill="#fff"/><rect x="89.60000000000002" y="94.19999999999999" width="57.60000000000002" height="5.50" fill="#a9d6e3"/><rect x="147.60" y="125.20" width="17.30" height="8.7" rx="1.6" fill="#77c77f"/><rect x="147.60" y="135.30" width="16.70" height="5.8" fill="#a9d6e3"/><rect x="162.20" y="166.60" width="28.70" height="8.7" rx="1.6" fill="#77c77f"/><rect x="162.20" y="176.70" width="20.80" height="5.8" fill="#d46262"/><rect x="181.80" y="176.70" width="1.2" height="5.8" fill="#c9222a"/><rect x="162.20" y="176.70" width="0.8" height="5.8" fill="#c9222a" opacity="0.6"/><rect x="184.00" y="208.00" width="16.90" height="8.7" rx="1.6" fill="#8de88f"/><path d="M185.60 208.00 H187.00 V216.70 H185.60 A1.6 1.6 0 0 1 184.00 215.10 V209.60 A1.6 1.6 0 0 1 185.60 208.00Z" fill="#72c37a"/><rect x="184.00" y="218.10" width="13.90" height="5.8" fill="#d46262"/><rect x="196.70" y="218.10" width="1.2" height="5.8" fill="#c9222a"/><rect x="184.00" y="218.10" width="0.8" height="5.8" fill="#c9222a" opacity="0.6"/><rect x="198.00" y="249.40" width="19.80" height="8.7" rx="1.6" fill="#8de88f"/><rect x="198.00" y="259.50" width="16.90" height="5.8" fill="#d46262"/><rect x="213.70" y="259.50" width="1.2" height="5.8" fill="#c9222a"/><rect x="198.00" y="259.50" width="0.8" height="5.8" fill="#c9222a" opacity="0.6"/><path d="M205.10000000000002 289.70000000000005 A1.5 1.5 0 0 1 206.60000000000002 288.20000000000005 H275.5 A1.5 1.5 0 0 1 277 289.70000000000005 V301.20000000000005 H205.10000000000002Z" fill="#86b1f9"/><path d="M205.10000000000002 289.70000000000005 A1.5 1.5 0 0 1 206.60000000000002 288.20000000000005 H225.5999999999999 V296.00000000000006 H205.10000000000002Z" fill="#7198df"/><path d="M205.10000000000002 296.00000000000006 H211.10000000000002 L205.10000000000002 301.20000000000005Z" fill="#7198df"/><path d="M206.90000000000003 301.20000000000005 L211.90000000000003 296.00000000000006 H270.2 L275.2 301.20000000000005Z" fill="#fff"/><rect x="205.10000000000002" y="301.20000000000005" width="71.89999999999998" height="5.50" fill="#a9d6e3"/><rect x="277.20" y="332.20" width="34.90" height="8.7" rx="1.6" fill="#8de88f"/><rect x="277.20" y="342.30" width="27.90" height="5.8" fill="#d46262"/><rect x="303.90" y="342.30" width="1.2" height="5.8" fill="#c9222a"/><rect x="277.20" y="342.30" width="0.8" height="5.8" fill="#c9222a" opacity="0.6"/><rect x="303.00" y="373.60" width="21.20" height="8.7" rx="1.6" fill="#77c77f"/><rect x="303.00" y="383.70" width="28.20" height="5.8" fill="#8de88f"/><rect x="334.10" y="415.00" width="16.90" height="8.7" rx="1.6" fill="#8de88f"/><rect x="334.10" y="425.10" width="13.90" height="5.8" fill="#d46262"/><rect x="346.80" y="425.10" width="1.2" height="5.8" fill="#c9222a"/><rect x="334.10" y="425.10" width="0.8" height="5.8" fill="#c9222a" opacity="0.6"/><path d="M348 455.29999999999995 A1.5 1.5 0 0 1 349.5 453.79999999999995 H360.5 A1.5 1.5 0 0 1 362 455.29999999999995 V466.79999999999995 H348Z" fill="#86b1f9"/><path d="M350.3 466.79999999999995 L355.0 461.4 L359.7 466.79999999999995Z" fill="#fff"/><rect x="348" y="466.79999999999995" width="14" height="5.50" fill="#a9d6e3"/><path d="M376.9000000000001 496.69999999999993 A1.5 1.5 0 0 1 378.4000000000001 495.19999999999993 H432.4000000000001 A1.5 1.5 0 0 1 433.9000000000001 496.69999999999993 V508.19999999999993 H376.9000000000001Z" fill="#86b1f9"/><path d="M378.7000000000001 508.19999999999993 L383.7000000000001 502.99999999999994 H427.1000000000001 L432.1000000000001 508.19999999999993Z" fill="#fff"/><rect x="376.9000000000001" y="508.19999999999993" width="57.0" height="5.50" fill="#a9d6e3"/><rect x="434.00" y="539.20" width="14.25" height="8.7" rx="1.6" fill="#8de88f"/><rect x="434.00" y="549.30" width="14.25" height="5.8" fill="#a9d6e3"/><rect x="448.00" y="580.60" width="14.30" height="8.7" rx="1.6" fill="#8de88f"/><rect x="448.00" y="590.70" width="14.30" height="5.8" fill="#a9d6e3"/><rect x="462.80" y="622.00" width="14.20" height="8.7" rx="1.6" fill="#8de88f"/><rect x="462.80" y="632.10" width="14.20" height="5.8" fill="#a9d6e3"/><rect x="477.00" y="663.40" width="14.00" height="8.7" rx="1.6" fill="#8de88f"/><rect x="477.00" y="673.50" width="14.00" height="5.8" fill="#a9d6e3"/></svg>
<div style="position:absolute;right:851.90px;top:-1.00px;font-size:11.6px;line-height:11.6px;color:#5d6169;white-space:nowrap;">Final Design Review</div>
<div style="position:absolute;right:844.10px;top:41.00px;font-size:11.6px;line-height:11.6px;color:#5d6169;white-space:nowrap;">Design Approval</div>
<div style="position:absolute;right:837.40px;top:82.00px;font-size:11.6px;line-height:11.6px;color:#5d6169;white-space:nowrap;">Preliminaries</div>
<div style="position:absolute;right:779.40px;top:124.00px;font-size:11.6px;line-height:11.6px;color:#5d6169;white-space:nowrap;">Land Surveying</div>
<div style="position:absolute;right:764.80px;top:165.00px;font-size:11.6px;line-height:11.6px;color:#5d6169;white-space:nowrap;">Site Clearing</div>
<div style="position:absolute;right:743.00px;top:206.00px;font-size:11.6px;line-height:11.6px;color:#5d6169;white-space:nowrap;">Foundation Laying</div>
<div style="position:absolute;right:729.00px;top:248.00px;font-size:11.6px;line-height:11.6px;color:#5d6169;white-space:nowrap;">Site Safety Setup</div>
<div style="position:absolute;right:721.90px;top:289.00px;font-size:11.6px;line-height:11.6px;color:#5d6169;white-space:nowrap;">Heating System Installation</div>
<div style="position:absolute;right:649.80px;top:331.00px;font-size:11.6px;line-height:11.6px;color:#5d6169;white-space:nowrap;">Module Mounting</div>
<div style="position:absolute;right:624.00px;top:372.00px;font-size:11.6px;line-height:11.6px;color:#5d6169;white-space:nowrap;">Electrical Connections</div>
<div style="position:absolute;right:592.90px;top:413.00px;font-size:11.6px;line-height:11.6px;color:#5d6169;white-space:nowrap;">System Testing</div>
<div style="position:absolute;right:579.00px;top:455.00px;font-size:11.6px;line-height:11.6px;color:#5d6169;white-space:nowrap;">Commissioning</div>
<div style="position:absolute;right:550.10px;top:496.00px;font-size:11.6px;line-height:11.6px;color:#5d6169;white-space:nowrap;">Infrastructure Setup</div>
<div style="position:absolute;right:493.00px;top:538.00px;font-size:11.6px;line-height:11.6px;color:#5d6169;white-space:nowrap;">Access Roads Creation</div>
<div style="position:absolute;right:479.00px;top:579.00px;font-size:11.6px;line-height:11.6px;color:#5d6169;white-space:nowrap;">Storage Facilities</div>
<div style="position:absolute;right:464.20px;top:620.00px;font-size:11.6px;line-height:11.6px;color:#5d6169;white-space:nowrap;">Security Infrastructure</div>
<div style="position:absolute;right:450.00px;top:662.00px;font-size:11.6px;line-height:11.6px;color:#5d6169;white-space:nowrap;">Water and Sanitation</div>
</div>
<div style="position:absolute;left:1713.3px;top:297.3px;width:14.700000000000045px;height:678.7px;background:#f8f8f8;border-left:1px solid #e6e6e8;border-right:1px solid #ececee;"></div>
<div style="position:absolute;left:1716.8px;top:341.7px;width:8.4px;height:121.1px;background:#c1c1c1;border-radius:4px;"></div>
<div style="position:absolute;left:803.3px;top:977px;width:910.7px;height:15px;background:#f9f9f9;border-top:1px solid #e6e6e8;border-right:1px solid #e8e8ea;"></div>
<div style="position:absolute;left:806.6px;top:981px;width:520.3px;height:7.8px;background:#c1c1c1;border-radius:4px;"></div>
<div style="position:absolute;left:57px;top:297.3px;width:740.5px;height:6px;background:linear-gradient(rgba(0,0,0,0.045),rgba(0,0,0,0));"></div>
<div style="position:absolute;left:803.3px;top:297.3px;width:910.0px;height:6px;background:#0000;background:linear-gradient(rgba(0,0,0,0.045),rgba(0,0,0,0));"></div>
</div></body></html>
